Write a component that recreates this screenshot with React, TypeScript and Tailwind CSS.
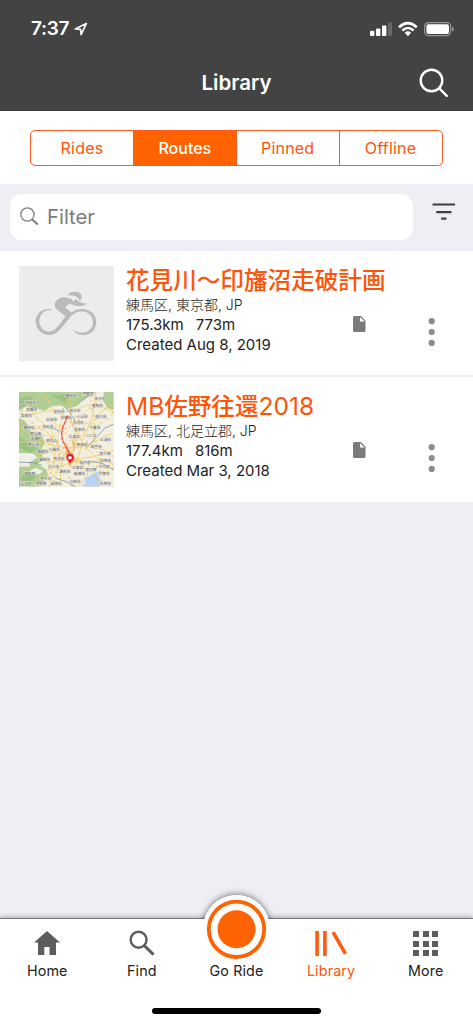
const segments = ["Rides", "Routes", "Pinned", "Offline"];

const routes = [
  {
    title: "花見川〜印旛沼走破計画",
    place: "練馬区, 東京都, JP",
    distance: "175.3km",
    climb: "773m",
    created: "Created Aug 8, 2019",
    map: false,
  },
  {
    title: "MB佐野往還2018",
    place: "練馬区, 北足立郡, JP",
    distance: "177.4km",
    climb: "816m",
    created: "Created Mar 3, 2018",
    map: true,
  },
];

// town labels on the map thumbnail: x, y, name
const towns: [number, number, string][] = [
  [156, 10, "鹿沼市"], [208, 5, "宇都宮"], [243, 20, "茂木町"], [236, 42, "真岡市"],
  [34, 31, "沼田市"], [38, 54, "前橋市"], [22, 72, "高崎市"], [120, 58, "足利市"],
  [168, 55, "栃木市"], [142, 76, "佐野市"], [190, 74, "小山市"], [246, 74, "桜川市"],
  [98, 83, "太田市"], [30, 107, "藤岡市"], [86, 103, "本庄市"], [178, 93, "古河市"],
  [228, 106, "下妻市"], [50, 124, "秩父郡"], [52, 139, "長瀞町"], [182, 112, "坂東市"],
  [166, 134, "久喜市"], [98, 146, "東松山"], [216, 130, "つくば"], [260, 142, "土浦市"],
  [44, 158, "秩父市"], [72, 180, "飯能市"], [190, 158, "野田市"], [232, 164, "取手市"],
  [258, 184, "龍ケ崎"], [106, 172, "川越市"], [77, 202, "青梅市"], [120, 200, "所沢市"],
  [198, 212, "松戸市"], [260, 205, "印西市"], [104, 224, "立川市"], [176, 228, "江東区"],
  [256, 224, "千代田"], [216, 234, "習志野"], [138, 238, "調布市"], [182, 246, "船橋市"],
  [32, 244, "相模原"], [80, 260, "厚木市"], [112, 276, "座間市"], [168, 268, "川崎市"],
  [256, 246, "千葉市"], [22, 274, "山北町"], [66, 276, "伊勢原"], [260, 274, "市原市"],
];

const roads = [
  "M0 65 Q40 70 60 62 T120 58 T190 45 T284 60",
  "M24 28 Q38 70 70 92 T112 150 T160 194 T194 238",
  "M60 0 L88 24 Q96 55 129 67 T176 121 T219 184 T270 238",
  "M230 0 Q226 65 208 105 T190 150 T172 218",
  "M0 150 Q50 147 90 158 T165 168 T230 148 T284 125",
  "M90 284 Q102 235 140 218 T205 197 T284 175",
  "M92 80 Q128 112 149 132 T173 155 T238 170 T284 226",
  "M124 284 L126 230 Q130 190 155 165 T190 130 T222 88 T284 35",
  "M0 110 Q74 102 88 124 T106 180 T99 236 T42 284",
  "M156 16 Q151 83 166 114 T157 188 T183 228 T178 284",
  "M82 214 Q142 198 169 209 T225 209 T284 218",
];

function StatusBar() {
  return (
    <div className="flex h-14 items-center justify-between pt-[2px] pr-[18px] pl-[31px]">
      <div className="flex items-center gap-[5px]">
        <span className="text-[19px] leading-6 font-semibold tracking-[-0.3px]">7:37</span>
        <svg width="14" height="14" viewBox="0 0 14 14" fill="none" stroke="white" strokeWidth="1.6" strokeLinejoin="round">
          <path d="M1.2 7 12.4 1.4 7.1 12.7 6.6 7.4Z" />
        </svg>
      </div>
      <svg width="86" height="18" viewBox="0 0 86 18" fill="white">
        <rect x="1" y="10.8" width="4.4" height="5.2" rx="1" />
        <rect x="7" y="8.6" width="4.4" height="7.4" rx="1" />
        <rect x="13" y="5.6" width="4.4" height="10.4" rx="1" />
        <rect x="19" y="2.4" width="4" height="13.6" rx="1" opacity=".2" />
        <g fill="none" stroke="white" strokeWidth="2.6">
          <path d="M30 7.2Q38.9-.9 47.8 7.2" />
          <path d="M33.3 10.5Q38.9 5.5 44.5 10.5" />
        </g>
        <path d="M35.7 12.7Q38.9 10 42.1 12.7L38.9 16.2Z" />
        <rect x="55.6" y="2.6" width="26" height="13" rx="3.8" fill="none" stroke="white" strokeOpacity=".45" strokeWidth="1.2" />
        <rect x="57.4" y="4.3" width="22.6" height="9.8" rx="2" />
        <path d="M83 6.8q2 .7 2 2.3t-2 2.3z" opacity=".45" />
      </svg>
    </div>
  );
}

function CyclistThumb() {
  return (
    <svg className="size-[94.5px] bg-[#ececec]" viewBox="0 0 284 284" fill="#bababa">
      <path d="M147 88C151 77 168 75 180 80Q190 86 188 97L183 105Q176 92 163 89Z" />
      <path d="M171 100Q184 113 203 113Q194 120 180 117Q170 114 163 106Z" />
      <path d="M108 112C113 100 126 91 143 95L158 99Q162 111 181 115Q193 117 204 113Q196 121 181 121Q162 120 153 113L138 124L154 137Q162 144 155 152L139 172C122 194 111 207 91 207C67 207 50 188 50 165C51 142 70 128 91 129Q97 129 101 133C79 129 62 144 61 165C61 184 75 198 92 197C110 195 124 174 140 151L117 134Q105 126 108 112Z" />
      <path d="M134 162C154 136 172 128 192 129C217 131 232 146 232 168C232 192 215 208 191 207Q170 206 162 190Q174 202 192 200C211 198 222 185 222 168C221 149 208 138 191 137C172 136 158 146 142 166L121 190Z" />
    </svg>
  );
}

function MapThumb() {
  return (
    <svg className="size-[94.5px] bg-[#f3efdf]" viewBox="0 0 284 284">
      <path d="M0 0H230L219 10 188 25 175 42 144 51 125 40 99 43 76 56 45 48 23 43 0 57ZM255 0H284V55L265 47 253 27ZM0 78L20 88 34 117 68 128 78 151 65 176 74 203 54 217 83 233 87 252 64 284H0V225L35 224 24 203 0 190Z" fill="#b0cd94" />
      <path d="M0 18L35 14 52 30 0 37ZM0 137L34 150 53 170 34 183 0 165ZM83 0L114 12 148 4 139 34ZM15 238L54 244 38 272 0 280Z" fill="#86b571" opacity=".5" />
      <path d="M0 183L40 184 57 196 33 211 0 207ZM49 228L72 237 60 248 28 240Z" fill="#f1f0e6" />
      <path d="M254 239L231 241 214 251 198 258 200 273 187 284H243L250 267 240 256Z" fill="#b8d3fa" />
      <g fill="none" stroke="#f3cb68" strokeWidth="2.6">
        {roads.map((d) => (
          <path key={d} d={d} />
        ))}
      </g>
      <g fill="none" stroke="#ecbf50" strokeWidth="4" strokeDasharray="5 7 2 10">
        {roads.slice(0, 9).map((d) => (
          <path key={d} d={d} transform="rotate(90 142 142)" />
        ))}
      </g>
      <path d="M139 145Q146 172 165 187L166 209 151 226 143 191ZM158 141L170 157 164 176Z" fill="#e9ba54" opacity=".8" />
      <g fill="none" stroke="#7996ad" strokeWidth="2.5">
        <path d="M223 0L200 18 178 35M143 48L169 86M82 104L125 117M199 170L219 150 238 130 259 108 284 97M0 211L42 212 69 220M207 207L250 214 284 234M111 259L143 270 170 284M0 46L18 38" />
      </g>
      <g fontFamily="'Noto Sans CJK JP', sans-serif" fontSize="11" fill="#666">
        {towns.map(([x, y, name]) => (
          <g key={name}>
            <rect x={x - 18} y={y - 6} width="36" height="12" fill="#e4e4df" opacity=".8" />
            <text x={x} y={y + 4} textAnchor="middle">{name}</text>
          </g>
        ))}
      </g>
      <path d="M147 71L140 88 132 104 128 126 131 147 140 161 147 178 154 189" fill="none" stroke="#ee4652" strokeWidth="4" strokeDasharray="14 2" />
      <path d="M153 216Q151 208 144 202Q138 188 150 186Q165 185 165 198Q164 205 157 210Z" fill="#ed1834" />
      <rect x="148" y="193" width="10" height="9" rx="2" fill="white" />
    </svg>
  );
}

function RouteRow({ route }: { route: (typeof routes)[number] }) {
  return (
    <li className="flex h-[126px] border-b-2 border-[#efeef4] bg-white pt-[15px] pl-[19px] last:border-b-0">
      {route.map ? <MapThumb /> : <CyclistThumb />}
      <div className="ml-[12.5px] w-[227px] text-[15px] leading-[19.3px] whitespace-nowrap text-[#222]">
        <h2 className="h-[30px] text-[23.6px] leading-[30px] font-medium text-[#ff5308]">
          {route.title.split(/([A-Z0-9]+)/).map((part, i) =>
            i % 2 ? (
              <span key={i} className="text-[24.5px] leading-none font-normal">{part}</span>
            ) : (
              part
            )
          )}
        </h2>
        <p className="-mt-px text-[14px] font-light">{route.place}</p>
        <p className="mt-px">
          {route.distance}
          <span className="ml-3">{route.climb}</span>
        </p>
        <p>{route.created}</p>
      </div>
      <svg className="mt-[50px] shrink-0" width="13" height="17" viewBox="0 0 13 17">
        <path d="M1.5 0H8l4.5 4.8v9.7Q12.5 16 11 16H1.5Q0 16 0 14.5v-13Q0 0 1.5 0Z" fill="#7b7b7b" />
        <path d="M7 1v4.6h4.6Z" fill="white" />
      </svg>
      <svg className="mt-[51px] ml-[62px] shrink-0" width="8" height="30" viewBox="0 0 8 30" fill="#8c8c8c">
        <circle cx="3.7" cy="4.2" r="3.1" />
        <circle cx="3.7" cy="15" r="3.1" />
        <circle cx="3.7" cy="25.9" r="3.1" />
      </svg>
    </li>
  );
}

function TabBar() {
  return (
    <nav className="relative h-[106px] border-t border-[#77777a] bg-white shadow-[0_-1px_5px_rgba(0,0,0,0.3)]">
      <div className="absolute top-[-24px] left-[203px] size-[67px] rounded-full bg-white shadow-[0_-1px_6px_rgba(0,0,0,0.5)]" />
      <div className="absolute inset-0 bg-white" />
      <div className="relative flex text-[14.3px] leading-5 tracking-[0.15px] text-[#222]">
        <div className="flex flex-1 flex-col items-center">
          <svg className="mt-[11px] mb-[5px]" width="26" height="26" viewBox="0 0 26 26" fill="#5c5c5c">
            <path d="M13 1 26 12.5H22V25H15.5V17H10.3V25H4V12.5H0Z" />
          </svg>
          Home
        </div>
        <div className="flex flex-1 flex-col items-center">
          <svg className="mt-[11px] mb-[5px]" width="26" height="26" viewBox="0 0 26 26" fill="none" stroke="#5c5c5c">
            <circle cx="9.6" cy="9.8" r="8" strokeWidth="2.4" />
            <path d="m15.5 15.7 9 8.9" strokeWidth="3" />
          </svg>
          Find
        </div>
        <div className="flex flex-1 flex-col items-center">
          <svg className="mt-[-24px] mb-[-1px]" width="67" height="67" viewBox="0 0 67 67">
            <circle cx="33.5" cy="33.5" r="33.5" fill="white" />
            <circle cx="33.5" cy="34.3" r="27.7" fill="none" stroke="#ff6200" strokeWidth="3.8" />
            <circle cx="33.5" cy="34.3" r="19" fill="#ff6200" />
          </svg>
          Go Ride
        </div>
        <div className="flex flex-1 flex-col items-center text-[#ff5308]">
          <svg className="mt-[11px] mb-[5px]" width="32" height="26" viewBox="0 0 32 26" fill="none" stroke="#ff5b10" strokeWidth="3.6">
            <path d="M2.1 1v25M9.9 1v25M18 2.1l12.5 21.8" />
          </svg>
          Library
        </div>
        <div className="flex flex-1 flex-col items-center">
          <div className="mt-3 mb-[5px] grid grid-cols-3 gap-[3.5px]">
            {[...Array(9)].map((_, i) => (
              <i key={i} className="size-[6px] bg-[#5c5c5c]" />
            ))}
          </div>
          More
        </div>
      </div>
      <div className="absolute bottom-[10px] left-[152px] h-[6px] w-[169px] rounded-full bg-black" />
    </nav>
  );
}

export default function App() {
  return (
    <div className="flex h-[1024px] w-[473px] flex-col overflow-hidden bg-[#efeef4] font-[Inter,'Noto_Sans_CJK_JP',sans-serif]">
      <header className="h-[111px] shrink-0 border-b border-[#383838] bg-[#434343] text-white">
        <StatusBar />
        <div className="relative flex h-[54px] items-center justify-center">
          <h1 className="text-[20.5px] font-semibold">Library</h1>
          <svg className="absolute top-[12px] right-[24px]" width="30" height="30" viewBox="0 0 30 30" fill="none" stroke="white" strokeWidth="2.4" strokeLinecap="round">
            <circle cx="12.5" cy="12.5" r="10.8" />
            <path d="m20.3 20.4 7.5 7.5" />
          </svg>
        </div>
      </header>

      <div className="h-[73px] shrink-0 bg-white px-[30px] pt-[19px]">
        <div className="flex h-9 w-[412.5px] overflow-hidden rounded-[5px] border border-[#ff5a20] text-[16px] tracking-[0.2px] text-[#ff5308]">
          {segments.map((name) => (
            <button
              key={name}
              className={`flex-1 border-r border-[#ff5a20] last:border-r-0 ${name === "Routes" ? "bg-[#ff6200] font-medium tracking-[0px] text-white" : ""}`}
            >
              {name}
            </button>
          ))}
        </div>
      </div>

      <div className="flex h-[67px] shrink-0 items-start pt-[10px] pl-[10px]">
        <div className="flex h-[45.5px] w-[402.5px] items-center rounded-xl bg-white pl-[10px] text-[#7c7c80]">
          <svg width="19" height="19" viewBox="0 0 19 19" fill="none" stroke="#7c7c80" strokeWidth="1.3">
            <circle cx="7.4" cy="7.5" r="6.6" />
            <path d="m12.3 12.4 5.4 5" strokeWidth="2" />
          </svg>
          <span className="mt-px ml-[8px] text-[20.3px]">Filter</span>
        </div>
        <svg className="mt-[9px] ml-[19px]" width="24" height="18" viewBox="0 0 24 18" stroke="#3f3f3f" strokeWidth="2.2">
          <path d="M.5 1.5h22.5M4.3 9.2h15.2M9.2 15.7h5.2" />
        </svg>
      </div>

      <ul className="h-[251px] shrink-0 overflow-hidden">
        {routes.map((route) => (
          <RouteRow key={route.title} route={route} />
        ))}
      </ul>

      <div className="flex-1" />
      <TabBar />
    </div>
  );
}
